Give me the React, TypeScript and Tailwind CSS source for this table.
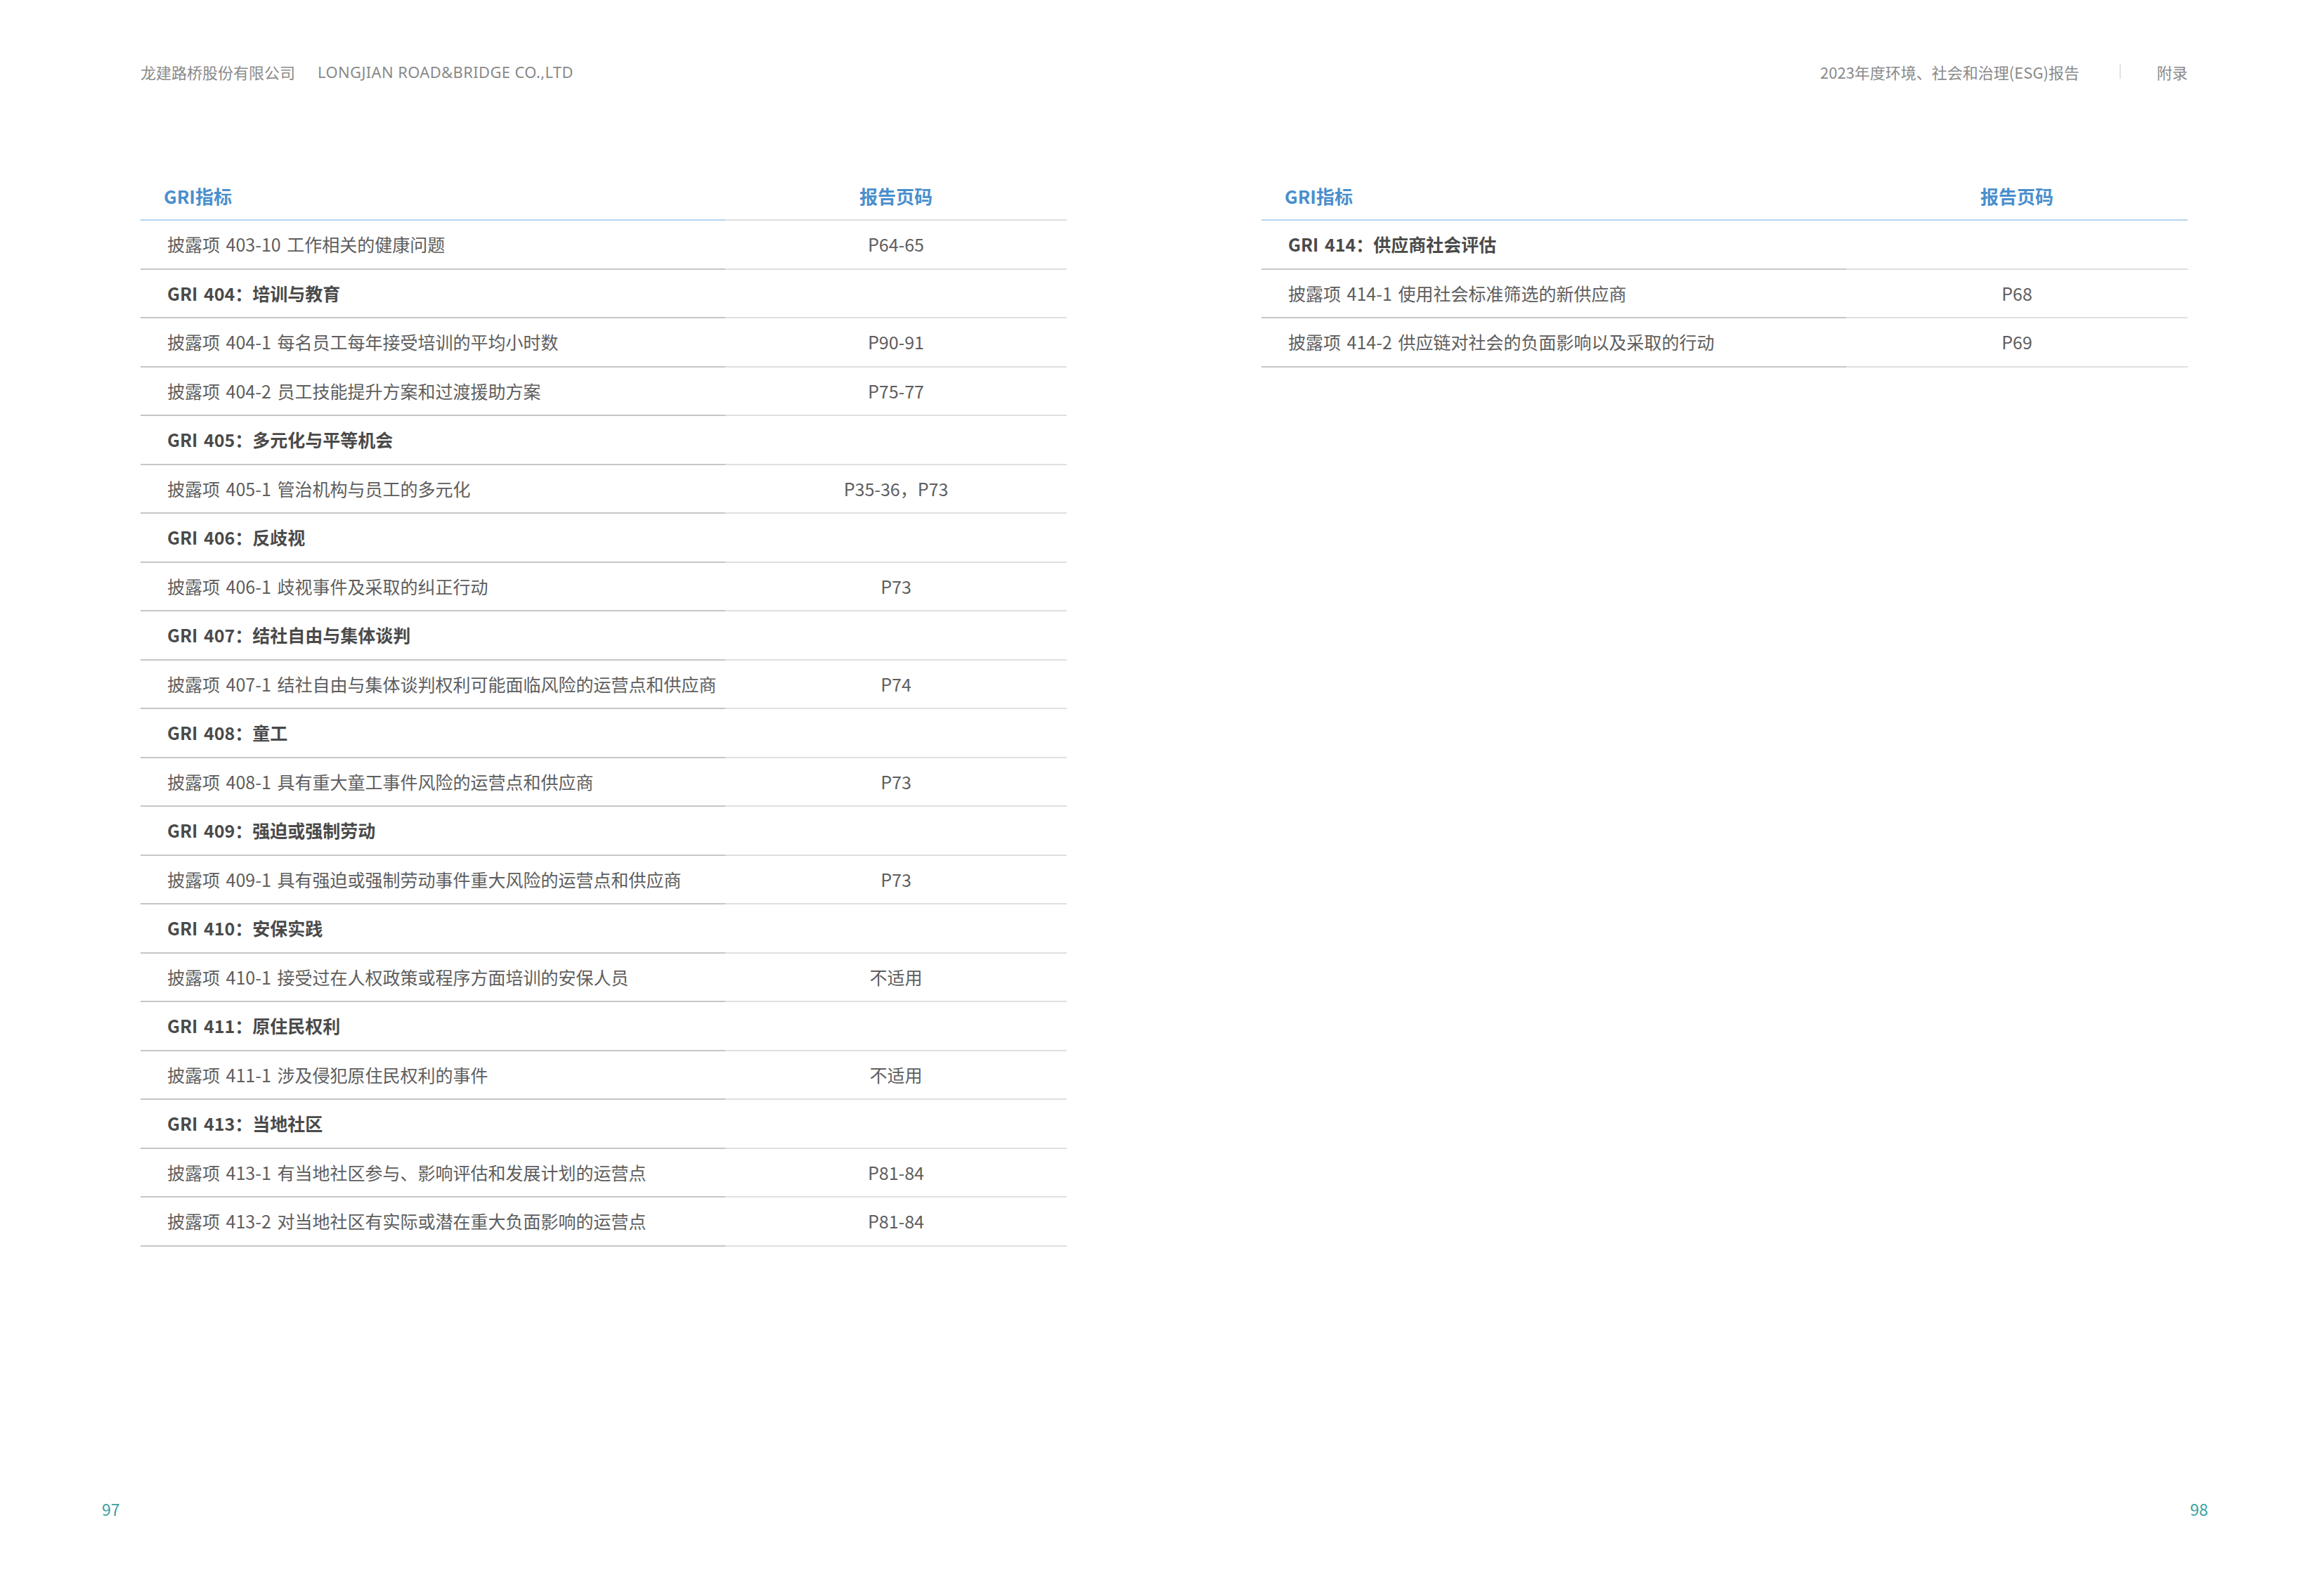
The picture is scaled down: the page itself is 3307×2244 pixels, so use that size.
import React from "react";

type Row = { t: string; p?: string; b?: boolean };

const leftRows: Row[] = [
  { t: "披露项 403-10 工作相关的健康问题", p: "P64-65" },
  { t: "GRI 404：培训与教育", b: true },
  { t: "披露项 404-1 每名员工每年接受培训的平均小时数", p: "P90-91" },
  { t: "披露项 404-2 员工技能提升方案和过渡援助方案", p: "P75-77" },
  { t: "GRI 405：多元化与平等机会", b: true },
  { t: "披露项 405-1 管治机构与员工的多元化", p: "P35-36，P73" },
  { t: "GRI 406：反歧视", b: true },
  { t: "披露项 406-1 歧视事件及采取的纠正行动", p: "P73" },
  { t: "GRI 407：结社自由与集体谈判", b: true },
  { t: "披露项 407-1 结社自由与集体谈判权利可能面临风险的运营点和供应商", p: "P74" },
  { t: "GRI 408：童工", b: true },
  { t: "披露项 408-1 具有重大童工事件风险的运营点和供应商", p: "P73" },
  { t: "GRI 409：强迫或强制劳动", b: true },
  { t: "披露项 409-1 具有强迫或强制劳动事件重大风险的运营点和供应商", p: "P73" },
  { t: "GRI 410：安保实践", b: true },
  { t: "披露项 410-1 接受过在人权政策或程序方面培训的安保人员", p: "不适用" },
  { t: "GRI 411：原住民权利", b: true },
  { t: "披露项 411-1 涉及侵犯原住民权利的事件", p: "不适用" },
  { t: "GRI 413：当地社区", b: true },
  { t: "披露项 413-1 有当地社区参与、影响评估和发展计划的运营点", p: "P81-84" },
  { t: "披露项 413-2 对当地社区有实际或潜在重大负面影响的运营点", p: "P81-84" },
];

const rightRows: Row[] = [
  { t: "GRI 414：供应商社会评估", b: true },
  { t: "披露项 414-1 使用社会标准筛选的新供应商", p: "P68" },
  { t: "披露项 414-2 供应链对社会的负面影响以及采取的行动", p: "P69" },
];

function Table({ rows, blueFull }: { rows: Row[]; blueFull: boolean }) {
  return (
    <div className="w-[1318px] self-start grid grid-cols-[832px_486px] content-start">
      <div className="h-[70px] border-b-2 border-[#b6d6ec] flex items-center pl-[33px] text-[26px] font-bold text-[#4a8fcd]">
        GRI指标
      </div>
      <div
        className={
          blueFull
            ? "h-[70px] border-b-2 border-[#b6d6ec] flex items-center justify-center text-[26px] font-bold text-[#4a8fcd]"
            : "h-[70px] border-b-2 border-[#dedede] flex items-center justify-center text-[26px] font-bold text-[#4a8fcd]"
        }
      >
        报告页码
      </div>
      {rows.map((r, i) => (
        <React.Fragment key={i}>
          <div
            className={
              r.b
                ? "h-[69.5px] border-b-2 border-[#c6c6c6] flex items-center pl-[38px] text-[25px] font-bold text-[#4a4a4a] whitespace-nowrap [word-spacing:3px]"
                : "h-[69.5px] border-b-2 border-[#c6c6c6] flex items-center pl-[38px] text-[25px] text-[#5e5e5e] whitespace-nowrap [word-spacing:3px]"
            }
          >
            {r.t}
          </div>
          <div className="h-[69.5px] border-b-2 border-[#e0e0e0] flex items-center justify-center text-[25px] text-[#5e5e5e] whitespace-nowrap">
            {r.p ?? ""}
          </div>
        </React.Fragment>
      ))}
    </div>
  );
}

export default function App() {
  return (
    <div className="w-[3307px] h-[2244px] bg-white flex flex-col font-['Noto_Sans_CJK_SC',sans-serif]">
      <header className="flex justify-between items-center pl-[200px] pr-[194px] pt-[87px] h-[116px] text-[22px] leading-[28px] text-[#8a8a8a]">
        <div className="flex items-center gap-[32px]">
          <span>龙建路桥股份有限公司</span>
          <span className="font-['Noto_Sans',sans-serif] text-[22px] tracking-[0.35px]">LONGJIAN ROAD&amp;BRIDGE CO.,LTD</span>
        </div>
        <div className="flex items-center">
          <span>2023年度环境、社会和治理(ESG)报告</span>
          <span className="w-[2px] h-[21px] bg-[#e2e2e2] ml-[57px] mr-[51px]"></span>
          <span>附录</span>
        </div>
      </header>
      <main className="flex items-start pl-[200px] gap-[277px] mt-[128px]">
        <Table rows={leftRows} blueFull={false} />
        <Table rows={rightRows} blueFull={true} />
      </main>
      <footer className="mt-auto flex justify-between pl-[145px] pr-[165px] pb-[82px] text-[23px] leading-[30px] text-[#3aa19e]">
        <span>97</span>
        <span>98</span>
      </footer>
    </div>
  );
}
